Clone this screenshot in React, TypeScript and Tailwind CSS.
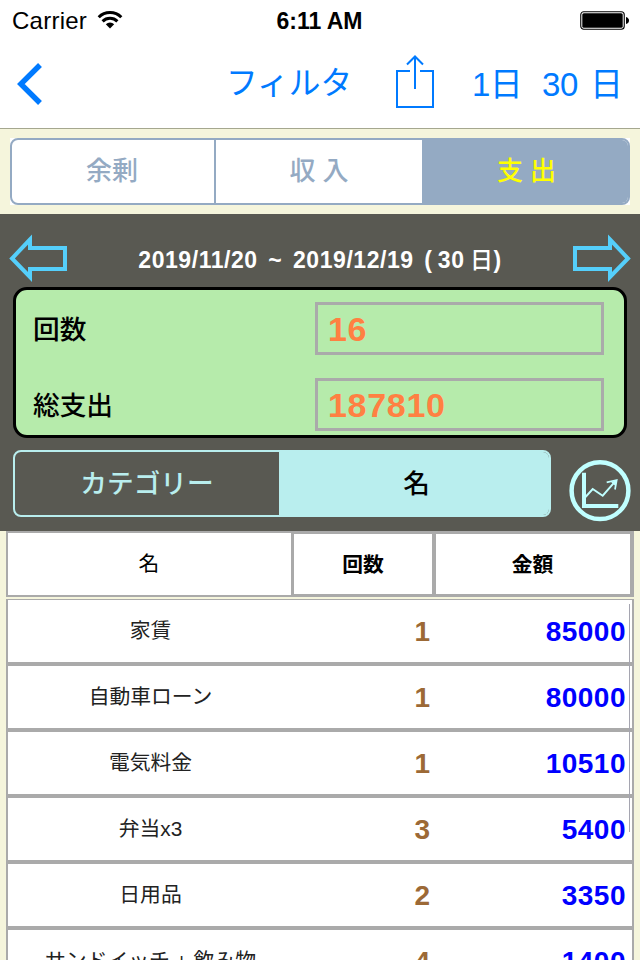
import React from 'react';

interface Entry {
  name: string;
  count: number;
  amount: number;
}

const entries: Entry[] = [
  { name: '家賃', count: 1, amount: 85000 },
  { name: '自動車ローン', count: 1, amount: 80000 },
  { name: '電気料金', count: 1, amount: 10510 },
  { name: '弁当x3', count: 3, amount: 5400 },
  { name: '日用品', count: 2, amount: 3350 },
  { name: 'サンドイッチ + 飲み物', count: 4, amount: 1400 },
];

const StatusBar: React.FC = () => (
  <div className="grid h-10 grid-cols-3 items-center pl-3 pr-[11px] text-black">
    <div className="flex items-center gap-[10px]">
      <span className="pt-[2px] text-[24px] leading-[38px] tracking-[0.25px]">Carrier</span>
      <svg width="26" height="20" viewBox="0 0 26 20" fill="none" stroke="black" strokeWidth="3">
        <path d="M1.7 7.2a16 16 0 0 1 22.6 0" />
        <path d="M5.6 11.4a10.5 10.5 0 0 1 14.8 0" />
        <path d="M13 18.5l-4.2-4.2a6 6 0 0 1 8.4 0z" fill="black" stroke="none" />
      </svg>
    </div>
    <span className="pr-[2px] pt-[2px] text-center text-[23px] font-bold leading-[38px]">6:11 AM</span>
    <svg className="mt-px justify-self-end" width="49" height="20" viewBox="0 0 49 20">
      <rect x="0.75" y="0.75" width="43.5" height="17.5" rx="3" fill="none" stroke="black" strokeWidth="1.1" />
      <rect x="2.3" y="2.3" width="40.4" height="14.4" rx="1.5" fill="black" />
      <path d="M46 6q3 1 3 3.5t-3 3.5z" fill="black" />
    </svg>
  </div>
);

const NavBar: React.FC = () => (
  <nav className="flex h-[88px] items-center pl-[17px] text-[33px] text-[#007aff]">
    <svg width="26" height="42" viewBox="0 0 26 42" fill="none" stroke="currentColor" strokeWidth="5.5">
      <path d="M23 2L3.8 21L23 40" />
    </svg>
    <span className="ml-[183px] w-[128px] whitespace-nowrap text-[31.7px] font-normal">フィルタ</span>
    <svg className="mb-[5px] ml-[42px]" width="38" height="53" viewBox="0 0 38 53" fill="none" stroke="currentColor" strokeWidth="2">
      <path d="M14 16H1v36h36V16H24" />
      <path d="M19 34V2M11 9.5l8-8l8 8" />
    </svg>
    <span className="ml-[38px] w-[50px] whitespace-nowrap pt-[2px] tracking-[-0.5px]">1日</span>
    <span className="ml-[20px] whitespace-pre pt-[2px] tracking-[-0.3px] [word-spacing:3px]">30 日</span>
  </nav>
);

const Arrow: React.FC<{ flipped?: boolean }> = ({ flipped }) => (
  <svg
    className={flipped ? '-scale-x-100' : ''}
    width="58"
    height="48"
    viewBox="0 0 58 48"
    fill="none"
    stroke="#55cffb"
    strokeWidth="4"
  >
    <path d="M21 5.5L3 24.5L21 43V35H56V14H21z" />
  </svg>
);

const TypeTabs: React.FC = () => (
  <div className="bg-[#f5f5dc] px-[10px] pb-[9px] pt-[9px]">
    <div className="bg-white">
      <div className="flex h-[67px] overflow-hidden rounded-lg border-2 border-[#94aac3] text-[26px] font-medium text-[#94aac3]">
        <div className="flex w-[204px] items-center justify-center border-r-2 border-[#94aac3] pr-[2px]">余剰</div>
        <div className="flex w-[206px] items-center justify-center whitespace-pre">収 入</div>
        <div className="flex flex-1 items-center justify-center whitespace-pre bg-[#94aac3] pl-[3px] text-[#ffff00]">支 出</div>
      </div>
    </div>
  </div>
);

const SummaryRow: React.FC<{ label: string; value: number }> = ({ label, value }) => (
  <div className="flex h-[53px] items-center justify-between">
    <span className="pt-[3px] text-[26.7px] font-medium text-black">{label}</span>
    <div className="flex h-full w-[289px] items-center border-[3px] border-[#aaaaaa] pl-[10px] pt-[2px] text-[34px] font-bold tracking-[0.7px] text-[#ff8042]">
      {value}
    </div>
  </div>
);

const Summary: React.FC = () => (
  <section className="h-[317px] bg-[#595952] pt-5">
    <div className="flex h-[48px] items-center justify-between px-[9px]">
      <Arrow />
      <span className="whitespace-pre pt-[4px] text-[23px] font-bold tracking-[0.55px] text-white [word-spacing:-1.6px]">
        {'2019/11/20  ~  2019/12/19  ( 30 '}
        <span className="font-medium">日</span>)
      </span>
      <Arrow flipped />
    </div>
    <div className="ml-[13px] mt-[5px] flex h-[151px] w-[614px] flex-col gap-[23px] rounded-[14px] border-[3px] border-black bg-[#b6ebab] pl-[17px] pr-[20px] pt-[12px]">
      <SummaryRow label="回数" value={16} />
      <SummaryRow label="総支出" value={187810} />
    </div>
    <div className="mt-3 flex pl-[13px]">
      <div className="flex h-[67px] w-[538px] overflow-hidden rounded-lg border-2 border-[#b9eeee] text-[26.7px] font-medium">
        <div className="flex w-[264px] items-center justify-center pt-[2px] text-[#b9eeee]">カテゴリー</div>
        <div className="flex flex-1 items-center justify-center bg-[#b9eeee] pl-[5px] pt-[2px] text-black">名</div>
      </div>
      <svg className="ml-[18px] mt-[9px]" width="62" height="63" viewBox="0 0 62 63" fill="none" stroke="#c0ffff">
        <circle cx="31" cy="31.7" r="28.4" strokeWidth="4.5" />
        <path d="M15 13.7V47H49.3" strokeWidth="4" />
        <path d="M16.5 38L23.7 30L33.7 36.7L46 22.7" strokeWidth="1.9" />
        <path d="M37.7 23.3L47.700 21L46 30.5" strokeWidth="1.7" />
        <path d="M42 23L47.7 21L46.5 27z" fill="#c0ffff" stroke="none" />
      </svg>
    </div>
  </section>
);

const TableHead: React.FC = () => (
  <div className="flex h-[66px] text-[20.8px] text-black">
    <div className="flex w-[285px] items-center justify-center border-y-2 border-l-2 border-[#aaaaaa] bg-white pr-px">名</div>
    <div className="flex w-[145px] items-center justify-center border-y-[3px] border-l-[3px] border-r-4 border-[#aaaaaa] bg-white pt-[2px] font-bold">
      回数
    </div>
    <div className="flex flex-1 items-center justify-center border-y-[3px] border-r-4 border-[#aaaaaa] bg-white pr-px pt-[2px] font-bold">
      金額
    </div>
  </div>
);

const EntryRow: React.FC<{ entry: Entry }> = ({ entry }) => (
  <div className="flex h-[66px] shrink-0 items-center border-b-4 border-[#aaaaaa]">
    <span className="w-[285px] whitespace-pre text-center text-[20.8px] text-[#222222]">{entry.name}</span>
    <span className="w-[137px] pt-[2px] text-right text-[28px] font-bold text-[#9c6936]">{entry.count}</span>
    <span className="flex-1 pr-[6px] pt-[2px] text-right text-[28px] font-bold tracking-[0.5px] text-[#0000ff]">{entry.amount}</span>
  </div>
);

export default function App() {
  return (
    <div className="flex h-[960px] w-[640px] flex-col overflow-hidden bg-[#f5f5dc] font-['Liberation_Sans','Noto_Sans_CJK_JP',sans-serif]">
      <header className="h-[129px] shrink-0 border-b border-[#a5a78f] bg-white">
        <StatusBar />
        <NavBar />
      </header>
      <TypeTabs />
      <Summary />
      <main className="flex min-h-0 flex-1 flex-col gap-[2px] px-[6px]">
        <TableHead />
        <div className="relative flex min-h-0 flex-1 flex-col overflow-hidden border-x-2 border-t border-[#aaaaaa] bg-white">
          {entries.map((entry) => (
            <EntryRow key={entry.name} entry={entry} />
          ))}
          {/* Scroll indicator */}
          <div className="absolute right-[2px] top-1 h-[228px] w-px bg-[#a5a5b0]" />
        </div>
      </main>
    </div>
  );
}
